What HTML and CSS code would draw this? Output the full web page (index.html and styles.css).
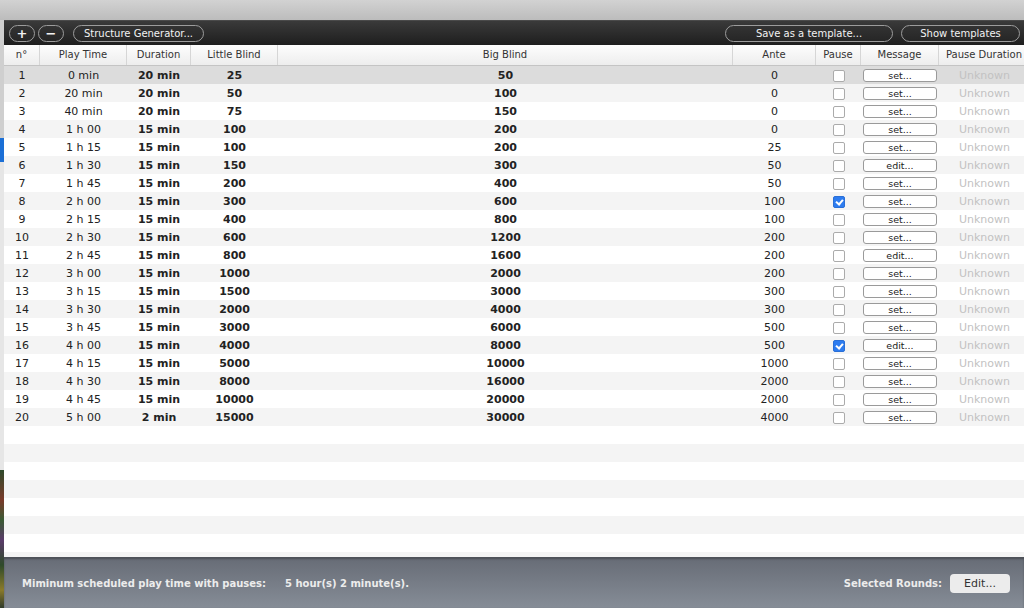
FILE: index.html
```html
<!DOCTYPE html>
<html lang="en">
<head>
  <meta charset="UTF-8">
  <title>Blind Structure</title>
  <link rel="stylesheet" href="styles.css">
</head>
<body>
  <div class="titlebar"></div>
  <div class="desk">
    <div class="edge"></div>
    <div class="window">
      <div class="toolbar">
        <button class="pill small">+</button>
        <button class="pill small">&minus;</button>
        <button class="pill gen">Structure Generator...</button>
        <div class="spacer"></div>
        <button class="pill save">Save as a template...</button>
        <button class="pill show">Show templates</button>
      </div>

      <div class="row head">
        <div>n°</div>
        <div>Play Time</div>
        <div>Duration</div>
        <div>Little Blind</div>
        <div>Big Blind</div>
        <div>Ante</div>
        <div>Pause</div>
        <div>Message</div>
        <div>Pause Duration</div>
      </div>

      <div class="rows" id="rows"></div>

      <div class="footer">
        <span class="label">Miminum scheduled play time with pauses:</span>
        <span class="total">5 hour(s) 2 minute(s).</span>
        <div class="spacer"></div>
        <span class="label">Selected Rounds:</span>
        <button class="edit">Edit...</button>
      </div>
    </div>
  </div>

  <script>
    const levels = [
      ["0 min", "20 min", 25, 50, 0],
      ["20 min", "20 min", 50, 100, 0],
      ["40 min", "20 min", 75, 150, 0],
      ["1 h 00", "15 min", 100, 200, 0],
      ["1 h 15", "15 min", 100, 200, 25],
      ["1 h 30", "15 min", 150, 300, 50, false, "edit..."],
      ["1 h 45", "15 min", 200, 400, 50],
      ["2 h 00", "15 min", 300, 600, 100, true],
      ["2 h 15", "15 min", 400, 800, 100],
      ["2 h 30", "15 min", 600, 1200, 200],
      ["2 h 45", "15 min", 800, 1600, 200, false, "edit..."],
      ["3 h 00", "15 min", 1000, 2000, 200],
      ["3 h 15", "15 min", 1500, 3000, 300],
      ["3 h 30", "15 min", 2000, 4000, 300],
      ["3 h 45", "15 min", 3000, 6000, 500],
      ["4 h 00", "15 min", 4000, 8000, 500, true, "edit..."],
      ["4 h 15", "15 min", 5000, 10000, 1000],
      ["4 h 30", "15 min", 8000, 16000, 2000],
      ["4 h 45", "15 min", 10000, 20000, 2000],
      ["5 h 00", "2 min", 15000, 30000, 4000]
    ];

    const rows = document.getElementById("rows");
    levels.forEach((l, i) => {
      const row = document.createElement("div");
      row.className = "row" + (i === 0 ? " selected" : "");
      row.innerHTML =
        `<div>${i + 1}</div>` +
        `<div>${l[0]}</div>` +
        `<div class="b">${l[1]}</div>` +
        `<div class="b">${l[2]}</div>` +
        `<div class="b">${l[3]}</div>` +
        `<div>${l[4]}</div>` +
        `<div><span class="check${l[5] ? " on" : ""}"></span></div>` +
        `<div><span class="msg">${l[6] || "set..."}</span></div>` +
        `<div class="dim">Unknown</div>`;
      rows.appendChild(row);
    });
  </script>
</body>
</html>
```

FILE: styles.css
```css
html, body {
  margin: 0;
  padding: 0;
  height: 100%;
  overflow: hidden;
  font-family: "DejaVu Sans", sans-serif;
  color: #222;
}

body {
  display: flex;
  flex-direction: column;
  background: #c6c6c6;
}

.titlebar {
  height: 20px;
  flex: none;
  background: linear-gradient(#d2d2d2, #bcbcbc);
}

.desk {
  flex: 1;
  display: flex;
  min-height: 0;
}

.edge {
  width: 4px;
  flex: none;
  background:
    linear-gradient(to bottom,
      #cfcfcf 0, #cfcfcf 118px,
      #1b6fd6 118px, #1b6fd6 142px,
      #e6e6e6 142px, #e6e6e6 450px,
      #2f4a2c 450px, #7a3b2a 480px, #3a5a34 500px, #5a3c6a 520px, #2e4a2a 545px, #8a7a2a 570px, #2f3a2a 588px);
}

.window {
  flex: 1;
  display: flex;
  flex-direction: column;
  min-width: 0;
  overflow: hidden;
  background: #fff;
}

.toolbar {
  height: 25px;
  flex: none;
  display: flex;
  align-items: center;
  gap: 3px;
  padding: 0 4px 0 5px;
  background: linear-gradient(#3a3a3a, #1e1e1e);
  border-top: 1px solid #4a4a4a;
  box-sizing: border-box;
}

.spacer {
  flex: 1;
}

.pill {
  height: 17px;
  border: 1px solid #9c9c9c;
  border-radius: 9px;
  background: linear-gradient(#333, #262626);
  color: #f2f2f2;
  font-family: "DejaVu Sans", sans-serif;
  font-size: 10px;
  padding: 0;
  line-height: 15px;
}

.small {
  width: 26px;
  font-size: 13px;
  font-weight: bold;
}

.gen {
  width: 131px;
  margin-left: 6px;
}

.save {
  width: 168px;
  margin-right: 5px;
}

.show {
  width: 119px;
}

.row {
  display: grid;
  grid-template-columns: 36px 87px 64px 87px 455px 83px 45px 78px 91px;
  height: 18px;
  align-items: center;
  font-size: 11px;
  text-align: center;
  width: 1026px;
}

.row > div {
  white-space: nowrap;
}

.row.head {
  height: 21px;
  flex: none;
  font-size: 10px;
  color: #333;
  background: linear-gradient(#fdfdfd, #ededed);
  border-bottom: 1px solid #c4c4c4;
  box-sizing: border-box;
}

.row.head > div {
  height: 100%;
  line-height: 20px;
  border-right: 1px solid #d6d6d6;
}

.rows {
  flex: 1;
  background: repeating-linear-gradient(#fff 0, #fff 18px, #f4f4f4 18px, #f4f4f4 36px);
}

.row.selected {
  background: #dcdcdc;
}

.b {
  font-weight: bold;
}

.dim {
  color: #c2c2c2;
}

.check {
  display: inline-block;
  width: 10px;
  height: 10px;
  border: 1px solid #ababab;
  border-radius: 2px;
  background: #fff;
  vertical-align: middle;
  position: relative;
}

.check.on {
  background: #2d7cf0;
  border-color: #2a6fd6;
}

.check.on::after {
  content: "";
  position: absolute;
  left: 3px;
  top: 1px;
  width: 3px;
  height: 5px;
  border: solid #fff;
  border-width: 0 2px 2px 0;
  transform: rotate(40deg);
}

.msg {
  display: inline-block;
  width: 72px;
  height: 11px;
  line-height: 11px;
  border: 1px solid #9a9a9a;
  border-radius: 3px;
  background: #fff;
  font-size: 9.5px;
  vertical-align: middle;
}

.footer {
  height: 51px;
  flex: none;
  display: flex;
  align-items: center;
  padding: 0 14px 0 18px;
  box-sizing: border-box;
  background: linear-gradient(#676c76, #868d97);
  border-top: 1px solid #4e5259;
  box-shadow: inset 0 1px 2px rgba(0, 0, 0, 0.3);
  color: #ececec;
  font-size: 10px;
  font-weight: bold;
}

.total {
  margin-left: 19px;
}

.edit {
  margin-left: 8px;
  width: 60px;
  height: 19px;
  border: none;
  border-radius: 4px;
  background: #ececec;
  color: #333;
  font-family: "DejaVu Sans", sans-serif;
  font-size: 11px;
  padding: 0;
}
```
